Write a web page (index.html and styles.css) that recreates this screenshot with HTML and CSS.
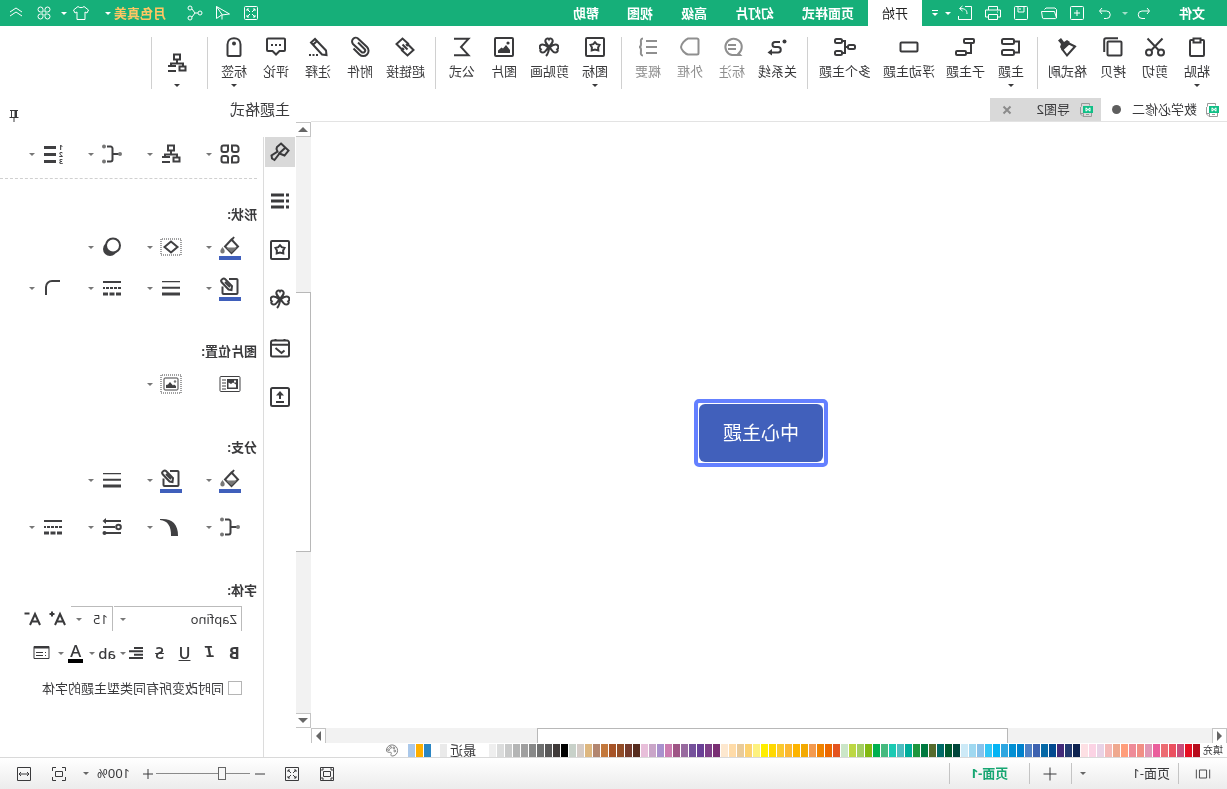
FILE: index.html
```html
<!DOCTYPE html>
<html lang="zh-CN">
<head>
<meta charset="utf-8">
<title>导图2</title>
<link rel="stylesheet" href="styles.css">
</head>
<body>
<svg class="defs" aria-hidden="true">
  <symbol id="i-star" viewBox="0 0 20 20"><rect x="1" y="1" width="18" height="18" rx="1" /><path d="M10 5.2l1.700 2 2.800.7-1.400 2.500.2 3-3.300-.8-3.300.8.2-3-1.400-2.500 2.800-.7z"/></symbol>
  <symbol id="i-clover" viewBox="0 0 20 20"><path d="M10 9.500C7 6.500 5.800 5.200 6.500 3c.8-2 2.800-2 3.500-.7C10.700 1 12.700 1 13.500 3c.7 2.200-.5 3.500-3.500 6.500zM9.500 10.500C6.500 13.500 6 15.500 4 15.500s-3.500-1.500-2.200-3.200C.3 11.500.2 8.500 2.200 7.800c2.300-.8 5 .7 7.300 2.700zM10.500 10.500c3 3 3.500 5 5.500 5s3.500-1.500 2.200-3.200c1.500-.8 1.600-3.800-.4-4.500-2.300-.8-5 .7-7.300 2.700zM10 10c0 4 .8 6.500 3 9"/></symbol>
  <symbol id="i-tree" viewBox="0 0 20 20"><path d="M7 1.500h6v5H7zM10 7v3M4 13v-2.500h12V13M1.500 13.500h6v4h-6zM11 13h8M11 18h8"/></symbol>
  <symbol id="i-branch" viewBox="0 0 20 20"><path d="M3 10h6M15 2.500h-3.500a2 2 0 0 0-2 2v11a2 2 0 0 0 2 2H15"/><g class="dot"><circle cx="2" cy="10" r="2"/><circle cx="18" cy="2.500" r="2"/><circle cx="18" cy="17.500" r="2"/></g></symbol>
  <symbol id="i-bucket" viewBox="0 0 22 24"><path d="M7 1l3 4M9.500 3.500l6.500 7-6.500 6.500L3 10.500z"/><path class="dot" d="M4 11.500h11l-5.500 5z"/><path class="dot" d="M18.500 11c1.200 1.800 2.200 3 2.200 4.200a2.200 2.200 0 0 1-4.400 0c0-1.200 1-2.400 2.200-4.200z"/><path class="bar" d="M0 20h22v4H0z"/></symbol>
  <symbol id="i-outline" viewBox="0 0 22 24"><path d="M12 2H4.500a1 1 0 0 0-1 1v13a1 1 0 0 0 1 1h13a1 1 0 0 0 1-1V9.500M9.500 13l-.5-4 7-7c1.500-1.500 5 1 3.500 3l-7 7.500zM11 10l5-5"/><path class="bar" d="M0 20h22v4H0z"/></symbol>
  <symbol id="i-weights" viewBox="0 0 20 20"><path class="fill" d="M1 3h18v1.300H1zM1 8.700h18v2H1zM1 14.500h18v3H1z"/></symbol>
  <symbol id="i-dashes" viewBox="0 0 20 20"><path class="fill" d="M1 3h18v2H1zM1 9h3v2H1zm4 0h3v2H5zm4 0h3v2H9zm4 0h3v2h-3zm4 0h2v2h-2zM1 14.500h5v3H1zm6.500 0h5v3h-5zm6.500 0h5v3h-5z"/></symbol>
  <symbol id="i-xmind" viewBox="0 0 16 16"><path class="sheet" d="M4.500 3.500v-2h8v3M2.500 4v10.500h8.500l2.500-2.500V5M10.500 14v-2.500H13M5 12.500h3"/><rect class="badge" x="1" y="4" width="10" height="7"/><path class="mark" d="M4 5.700v3.600M8 5.700v3.600M4 6l4 3M8 6l-4 3"/></symbol>
</svg>

<div class="app">
  <header class="titlebar">
    <button class="menu file">文件</button>
    <button class="tool undo" aria-label="撤销"><svg viewBox="0 0 16 16"><path d="M5 3L2.500 6 5 9M3 6h7a3.500 3.500 0 0 1 0 7.500H7"/></svg></button>
    <button class="drop faded" aria-label="撤销列表"><i class="caret"></i></button>
    <button class="tool" aria-label="重做"><svg viewBox="0 0 16 16"><path d="M11 3l2.500 3L11 9M13 6H6.500a3.500 3.500 0 0 0 0 7.500H9"/></svg></button>
    <button class="tool" aria-label="新建"><svg viewBox="0 0 16 16"><path d="M2.500 1.500h11a1 1 0 0 1 1 1v11a1 1 0 0 1-1 1h-11a1 1 0 0 1-1-1v-11a1 1 0 0 1 1-1zM8 5v6M5 8h6"/></svg></button>
    <button class="tool" aria-label="打开"><svg viewBox="0 0 16 16"><path d="M.5 13V4.500L2 3h9l1.500 1.500M.5 13l2-6.500h13L14.500 13a1 1 0 0 1-1 .6H1.500z"/></svg></button>
    <button class="tool" aria-label="保存"><svg viewBox="0 0 16 16"><path d="M2.500 1.500h11a1 1 0 0 1 1 1v11a1 1 0 0 1-1 1h-11a1 1 0 0 1-1-1v-11a1 1 0 0 1 1-1zM5 2v5h6V2M9 3v2"/></svg></button>
    <button class="tool" aria-label="打印"><svg viewBox="0 0 16 16"><path d="M3.500 5V1.500h9V5M3.500 12H.5V5h15v7h-3M3.500 9.500h9v5h-9zM3 7h1"/></svg></button>
    <button class="tool" aria-label="导出"><svg viewBox="0 0 16 16"><path d="M8 1.500H1.500v13h13V11M6 9c0-4 2-5.500 7-5.500M10.500 1l3 2.500-3 2.500"/></svg></button>
    <button class="drop tight" aria-label="导出选项"><i class="caret"></i></button>
    <button class="drop more" aria-label="更多"><i class="line"></i><i class="caret"></i></button>
    <nav class="tabs">
      <button class="menu current">开始</button>
      <button class="menu">页面样式</button>
      <button class="menu">幻灯片</button>
      <button class="menu">高级</button>
      <button class="menu">视图</button>
      <button class="menu">帮助</button>
    </nav>
    <button class="tool first-right" aria-label="全屏"><svg viewBox="0 0 16 16"><path d="M2.500 1.500h11a1 1 0 0 1 1 1v11a1 1 0 0 1-1 1h-11a1 1 0 0 1-1-1v-11a1 1 0 0 1 1-1zM4 6V4h2M4 4l3 3M10 4h2v2M12 4L9 7M4 10v2h2M4 12l3-3M10 12h2v-2M12 12L9 9"/></svg></button>
    <button class="tool" aria-label="发送"><svg viewBox="0 0 16 16"><path d="M14.500 1.500v12L9.500 10 1.500 9zM14.500 1.500L9 9.500v5"/></svg></button>
    <button class="tool" aria-label="分享"><svg viewBox="0 0 16 16"><circle cx="3" cy="8" r="2"/><circle cx="13" cy="3" r="2"/><circle cx="13" cy="13" r="2"/><path d="M5 8h3l3-4M8 8l3 4"/></svg></button>
    <button class="account">月色真美</button>
    <button class="drop" aria-label="账户"><i class="caret"></i></button>
    <button class="tool shirt" aria-label="皮肤"><svg viewBox="0 0 16 16"><path d="M5 1.500c1 1.500 5 1.500 6 0l4.500 3.500-1.500 3-2-1v7.500H4V7L2 8 .5 5z"/></svg></button>
    <button class="drop" aria-label="皮肤选项"><i class="caret"></i></button>
    <button class="tool" aria-label="应用"><svg viewBox="0 0 16 16"><path d="M2 4.500a2.500 2.500 0 0 1 5 0V7H4.500A2.500 2.500 0 0 1 2 4.500zM9 7V4.500A2.500 2.500 0 1 1 11.500 7zM7 9v2.500A2.500 2.500 0 1 1 4.500 9zM9 9h2.500A2.500 2.500 0 1 1 9 11.500z"/></svg></button>
    <button class="tool" aria-label="收起"><svg viewBox="0 0 16 16"><path d="M2 7l6-4 6 4M2 11l6-4 6 4"/></svg></button>
  </header>

  <div class="ribbon">
    <div class="group">
      <button class="cmd"><svg viewBox="0 0 20 20"><path d="M6 3H4a1 1 0 0 0-1 1v14a1 1 0 0 0 1 1h12a1 1 0 0 0 1-1V4a1 1 0 0 0-1-1h-2M6.500 1.500h7v4h-7z"/></svg><span>粘贴</span><i class="caret"></i></button>
      <button class="cmd"><svg viewBox="0 0 20 20"><circle cx="4" cy="15.500" r="3"/><circle cx="16" cy="15.500" r="3"/><path d="M2.500 1.500l11 11.500M17.500 1.500l-11 11.500"/></svg><span>剪切</span></button>
      <button class="cmd"><svg viewBox="0 0 20 20"><rect x="1.500" y="4.500" width="14" height="14" rx="1"/><path d="M5 1.200h12a1.800 1.800 0 0 1 1.800 1.800v12"/></svg><span>拷贝</span></button>
      <button class="cmd three"><svg viewBox="0 0 20 20"><path d="M2 9.500l6-3 6.500 6L10 18.500z"/><path class="fill" d="M7 5l3-2 3 2 3-4L19 3.500l-3 3.500 1 3-2 3.500z"/></svg><span>格式刷</span></button>
    </div>
    <div class="group">
      <button class="cmd"><svg viewBox="0 0 20 20"><rect x="7" y="2" width="12" height="5" rx="1.500"/><rect x="7" y="13" width="12" height="5" rx="1.500"/><path d="M7 4.500H2v11h5"/></svg><span>主题</span><i class="caret"></i></button>
      <button class="cmd three"><svg viewBox="0 0 20 20"><rect x="1" y="2" width="10" height="4" rx="1"/><rect x="9" y="14" width="10" height="4" rx="1"/><path d="M4 6v10h5"/></svg><span>子主题</span></button>
      <button class="cmd four"><svg viewBox="0 0 20 20"><rect x="1.500" y="5.500" width="17" height="9" rx="1"/></svg><span>浮动主题</span></button>
      <button class="cmd four"><svg viewBox="0 0 20 20"><rect x="0" y="8" width="7" height="4" rx="1.500"/><rect x="13" y="2" width="7" height="4" rx="1.500"/><rect x="13" y="14" width="7" height="4" rx="1.500"/><path d="M7 10h3M13 4h-3v12h3"/></svg><span>多个主题</span></button>
    </div>
    <div class="group">
      <button class="cmd three"><svg viewBox="0 0 20 20"><path d="M7 5h5a2.500 2.500 0 0 1 0 5H9a2.700 2.700 0 0 0 0 5.500h7"/><path class="fill" d="M15 12l4.500 3.500-4.500 3z"/><circle class="fill" cx="2.500" cy="4.500" r="2"/></svg><span>关系线</span></button>
      <button class="cmd" disabled><svg viewBox="0 0 20 20"><path d="M3.500 16.500A8.200 8.200 0 1 1 10 18H2zM6 8h8M6 12h8"/></svg><span>标注</span></button>
      <button class="cmd" disabled><svg viewBox="0 0 20 20"><path d="M1.500 3a1.500 1.500 0 0 1 1.500-1.500h9c3 1 7 6 7 8.500s-4 7-7 7.500H3A1.500 1.500 0 0 1 1.500 16z"/></svg><span>外框</span></button>
      <button class="cmd" disabled><svg viewBox="0 0 20 20"><path d="M1 4h11M1 10h11M1 16h11M15 1.500c3 0 2 3 2 5.500 0 1.500.5 3 2 3-1.500 0-2 1.500-2 3 0 2.500 1 5.500-2 5.500"/></svg><span>概要</span></button>
    </div>
    <div class="group">
      <button class="cmd"><svg><use href="#i-star"/></svg><span>图标</span><i class="caret"></i></button>
      <button class="cmd three"><svg><use href="#i-clover"/></svg><span>剪贴画</span></button>
      <button class="cmd"><svg viewBox="0 0 20 20"><rect x="1" y="1" width="18" height="18" rx="1"/><path class="fill" d="M4 16v-3l4-5 3 3.500 1.500-1 3.500 3V16z"/><circle class="fill" cx="6" cy="6" r="1.600"/></svg><span>图片</span></button>
      <button class="cmd"><svg viewBox="0 0 20 20"><path d="M18 1.800H3.500l7.500 8.200-7.500 8.200H18"/></svg><span>公式</span></button>
    </div>
    <div class="group">
      <button class="cmd three"><svg viewBox="0 0 20 20"><path d="M9 8.500L7 6.500 12.500 1.500 18.500 7l-5.500 5.500-1.500-1.500M11 11.500l2 2L7.500 18.500 1.500 13 7 7.500l1.500 1.500M7.500 12.500l5-5"/></svg><span>超链接</span></button>
      <button class="cmd"><svg viewBox="0 0 20 20"><path d="M12 5.500l-6.500 6.500a2 2 0 0 0 3 3l8.500-8a3.700 3.700 0 0 0-5.500-5L3 10a5 5 0 0 0 7.500 7.500l6-6"/></svg><span>附件</span></button>
      <button class="cmd"><svg viewBox="0 0 20 20"><path d="M2 13.500L13 2l4 3.500L6 17.500l-4.500.5zM11 4l4 3.700"/><path class="fill" d="M10 17h2v2h-2zm3.500 0h2v2h-2zm3.500 0h2v2h-2z"/></svg><span>注释</span></button>
      <button class="cmd"><svg viewBox="0 0 20 20"><path d="M2 1.500h16a1 1 0 0 1 1 1V13a1 1 0 0 1-1 1h-4.500L10 17.500 6.500 14H2a1 1 0 0 1-1-1V2.500a1 1 0 0 1 1-1z"/><path class="fill" d="M5 7h2v2H5zm4 0h2v2H9zm4 0h2v2h-2z"/></svg><span>评论</span></button>
      <button class="cmd"><svg viewBox="0 0 20 20"><path d="M3.500 7.500c0-4 3-6.300 6.500-6.300s6.500 2.300 6.500 6.300V18a1 1 0 0 1-1 1h-11a1 1 0 0 1-1-1z"/><circle class="fill" cx="10" cy="6.500" r="2"/></svg><span>标签</span><i class="caret"></i></button>
    </div>
    <div class="group solo">
      <button class="cmd" aria-label="布局"><svg><use href="#i-tree"/></svg><i class="caret"></i></button>
    </div>
  </div>

  <main class="work">
    <section class="editor">
      <div class="docs">
        <button class="doc"><svg><use href="#i-xmind"/></svg><span>数学必修二</span><i class="unsaved"></i></button>
        <button class="doc active"><svg><use href="#i-xmind"/></svg><span>导图2</span><svg class="close" viewBox="0 0 10 10"><path d="M1.500 1.500l7 7M8.500 1.500l-7 7"/></svg></button>
      </div>
      <div class="stage">
        <div class="canvas"><div class="topic"><span>中心主题</span></div></div>
        <div class="vscroll">
          <button class="up" aria-label="向上滚动"><i></i></button>
          <div class="track"><div class="thumb"></div></div>
          <button class="down" aria-label="向下滚动"><i></i></button>
        </div>
        <div class="hscroll">
          <button class="left" aria-label="向左滚动"><i></i></button>
          <div class="track"><div class="thumb"></div></div>
          <button class="right" aria-label="向右滚动"><i></i></button>
        </div>
      </div>
      <div class="palette">
        <span class="fill-label">填充</span>
        <div class="swatches" id="colors"></div>
        <span class="recent-label">最近</span>
        <div class="swatches"><i class="sw" style="background:#eaeaea"></i></div>
        <div class="swatches recent" id="recent"></div>
        <button class="wheel" aria-label="更多颜色"><svg viewBox="0 0 14 14"><path d="M7 1a6 6 0 0 1 6 5.500c0 2-1.500 2.500-3 2.500H8.500c-1 0-1 1-.5 1.800S8 13 7 13A6 6 0 0 1 7 1z"/><circle cx="4" cy="7.500" r="1"/><circle cx="5" cy="4.200" r="1"/><circle cx="8.500" cy="3.700" r="1"/><circle cx="10.700" cy="6.200" r="1"/></svg></button>
      </div>
    </section>

    <aside class="panel">
      <div class="panel-head"><h2>主题格式</h2><button class="pin" aria-label="固定"><svg viewBox="0 0 12 14"><path d="M2 1.500h8M3.500 1.500V8M8.500 1.500V8M1.500 8.500h9M6 9v4"/><path class="fill" d="M3 1h2.500v7H3z"/></svg></button></div>
      <div class="panel-body">
        <div class="rail">
          <button class="on" aria-label="样式"><svg viewBox="0 0 20 20"><path d="M9 1.500l-7.500 7 4 5 2.500-1 2.500-1 5 6.500 2.500-1.500.5-3-6-4 1-2.500-.5-2zM5 6l6.500 6"/></svg></button>
          <button aria-label="大纲"><svg viewBox="0 0 20 20"><path class="fill" d="M1 2.500h3v3H1zM1 8.500h3v3H1zM1 14.500h3v3H1zM6 2.500h13v3H6zM6 8.500h13v3H6zM6 14.500h13v3H6z"/></svg></button>
          <button aria-label="图标"><svg><use href="#i-star"/></svg></button>
          <button aria-label="剪贴画"><svg><use href="#i-clover"/></svg></button>
          <button aria-label="任务"><svg viewBox="0 0 20 20"><path d="M3 2.500h14a2 2 0 0 1 2 2V17a1.500 1.500 0 0 1-1.500 1.500h-15A1.500 1.500 0 0 1 1 17V4.500a2 2 0 0 1 2-2zM1 6.800h18M5.500 1v2M14.500 1v2M14.500 10l-6 5L5.500 12.500"/></svg></button>
          <button aria-label="导出"><svg viewBox="0 0 20 20"><rect x="1" y="1" width="18" height="18" rx="1.500"/><path d="M10 12V7M6 15h8"/><path class="fill" d="M10 4l4 4.500H6z"/></svg></button>
        </div>
        <div class="format">
          <div class="tools top">
            <button aria-label="主题样式"><svg viewBox="0 0 20 20"><path d="M1.500 4a2.500 2.500 0 0 1 2.500-2.500h4V6a2 2 0 0 1-2 2H3.500a2 2 0 0 1-2-2zM12 1.500h4.500a2 2 0 0 1 2 2V6a2 2 0 0 1-2 2H14a2 2 0 0 1-2-2zM1.500 14a2 2 0 0 1 2-2H6a2 2 0 0 1 2 2v4.500H3.500a2 2 0 0 1-2-2zM12 14a2 2 0 0 1 2-2h2.500a2 2 0 0 1 2 2v2.500a2 2 0 0 1-2 2H12z"/></svg><i class="caret"></i></button>
            <button aria-label="布局"><svg><use href="#i-tree"/></svg><i class="caret"></i></button>
            <button aria-label="连接样式"><svg><use href="#i-branch"/></svg><i class="caret"></i></button>
            <button aria-label="编号"><svg viewBox="0 0 20 20"><path class="fill" d="M7 2h12v3H7zM7 9h12v3H7zM7 16h12v3H7z"/><g class="nums"><text x="0" y="6">1</text><text x="0" y="13">2</text><text x="0" y="20">3</text></g></svg><i class="caret"></i></button>
          </div>
          <h3>形状:</h3>
          <div class="tools">
            <button aria-label="填充"><svg class="tall"><use href="#i-bucket"/></svg><i class="caret"></i></button>
            <button aria-label="形状"><svg viewBox="0 0 20 20"><rect class="dots" x="0" y="2" width="20" height="16"/><path d="M10 4.500l6.500 5.500-6.500 5.500L3.500 10z"/></svg><i class="caret"></i></button>
            <button aria-label="阴影"><svg viewBox="0 0 20 20"><circle class="fill" cx="12" cy="12" r="7"/><circle class="moon" cx="9" cy="8.500" r="7"/></svg><i class="caret"></i></button>
          </div>
          <div class="tools second">
            <button aria-label="边框颜色"><svg class="tall"><use href="#i-outline"/></svg><i class="caret"></i></button>
            <button aria-label="边框粗细"><svg><use href="#i-weights"/></svg><i class="caret"></i></button>
            <button aria-label="边框线型"><svg><use href="#i-dashes"/></svg><i class="caret"></i></button>
            <button aria-label="圆角"><svg viewBox="0 0 20 20"><path d="M3 3h8a6 6 0 0 1 6 6v8"/></svg><i class="caret"></i></button>
          </div>
          <h3>图片位置:</h3>
          <div class="tools">
            <button aria-label="图文排列"><svg viewBox="0 0 20 20"><rect class="thin" x="0" y="2.500" width="20" height="15" rx="1"/><path class="fill" d="M2 5h11v10H2z"/><path class="snow" d="M4 13.500v-3l3-2 2 1.500 2.500-1.500v5zM4 6.500h2v2H4z"/><path class="thin" d="M14 6h4M14 9h4M14 12h4M14 15h4"/></svg></button>
            <button aria-label="图片位置"><svg viewBox="0 0 20 20"><rect class="dots" x="0" y="1" width="20" height="18"/><rect class="thin" x="3" y="4" width="14" height="12" rx="1"/><path class="fill" d="M5 14v-2l2-1.500 1 1 3-3.500 2 2.500 2 .5v3z"/><circle class="dot" cx="6" cy="7.500" r="1.200"/></svg><i class="caret"></i></button>
          </div>
          <h3>分支:</h3>
          <div class="tools">
            <button aria-label="分支填充"><svg class="tall"><use href="#i-bucket"/></svg><i class="caret"></i></button>
            <button aria-label="分支颜色"><svg class="tall"><use href="#i-outline"/></svg><i class="caret"></i></button>
            <button aria-label="分支粗细"><svg><use href="#i-weights"/></svg><i class="caret"></i></button>
          </div>
          <div class="tools third">
            <button aria-label="分支样式"><svg><use href="#i-branch"/></svg><i class="caret"></i></button>
            <button aria-label="渐细线"><svg viewBox="0 0 20 20"><path class="fill" d="M21 2C10 1 3 6 3 19h7C10 9 13 4 21 3z"/></svg><i class="caret"></i></button>
            <button aria-label="箭头"><svg viewBox="0 0 20 20"><path d="M1 4h15M7 10h12M1 16h15"/><path class="fill" d="M16 1l3.500 3L16 7z"/><circle cx="3.500" cy="10" r="2.300"/><circle class="fill" cx="17.500" cy="16" r="2"/></svg><i class="caret"></i></button>
            <button aria-label="分支线型"><svg><use href="#i-dashes"/></svg><i class="caret"></i></button>
          </div>
          <h3>字体:</h3>
          <div class="fontrow">
            <span class="combo family"><select aria-label="字体"><option>Zapfino</option></select><i class="caret"></i></span>
            <span class="combo size"><select aria-label="字号"><option>15</option></select><i class="caret"></i></span>
            <button aria-label="增大字号"><svg viewBox="0 0 18 18"><path d="M2 15L7 4l5 11M4 11.500h6M12.500 4h5M15 1.500v5"/></svg></button>
            <button aria-label="减小字号"><svg viewBox="0 0 18 18"><path d="M2 15L7 4l5 11M4 11.500h6M12.500 3.500h5"/></svg></button>
          </div>
          <div class="textrow">
            <button class="letter bold">B</button>
            <button class="letter italic">I</button>
            <button class="letter under">U</button>
            <button class="letter strike">S</button>
            <button class="pair" aria-label="对齐"><svg viewBox="0 0 14 14"><path d="M0 2h9M0 5.300h14M0 8.700h9M0 12h14"/></svg><i class="caret"></i></button>
            <button class="pair ab">ab<i class="caret"></i></button>
            <button class="pair color"><span>A</span><i class="caret"></i></button>
            <button class="pair box" aria-label="文本框"><svg viewBox="0 0 18 16"><path class="thin" d="M1 1.500h15v12H1zM4 7.500h1M4 10.500h1M7 7.500h7M7 10.500h7"/><path class="fill" d="M1 1h15v2.500H1z"/></svg></button>
          </div>
          <label class="same"><input type="checkbox"><span>同时改变所有同类型主题的字体</span></label>
        </div>
      </div>
    </aside>
  </main>

  <footer class="status">
    <button class="view" aria-label="页面视图"><svg viewBox="0 0 18 16"><path d="M1.500 3v10M5 3.500h8v9H5zM16.500 3v10"/></svg></button>
    <button class="page"><span>页面-1</span><i class="caret"></i></button>
    <button class="add" aria-label="添加页面"><svg viewBox="0 0 16 16"><path d="M8 1.500v13M1.500 8h13"/></svg></button>
    <button class="pagetab"><span>页面-1</span></button>
    <button class="ico push" aria-label="适合页面"><svg viewBox="0 0 16 16"><path d="M1.500 1.500h13v13h-13zM4.500 5.500h7v5h-7zM3 5V3h2M11 3h2v2M13 11v2h-2M5 13H3v-2"/></svg></button>
    <button class="ico" aria-label="全屏"><svg viewBox="0 0 16 16"><path d="M1.500 1.500h13v13h-13zM4 6V4h2M4 4l3 3M10 4h2v2M12 4L9 7M4 10v2h2M4 12l3-3M10 12h2v-2M12 12L9 9"/></svg></button>
    <button class="step minus" aria-label="缩小"><svg viewBox="0 0 12 12"><path d="M1 6h10"/></svg></button>
    <input class="zoom" type="range" min="0" max="100" value="28" aria-label="缩放">
    <button class="step" aria-label="放大"><svg viewBox="0 0 12 12"><path d="M1 6h10M6 1v10"/></svg></button>
    <button class="percent"><span>100%</span><i class="caret"></i></button>
    <button class="ico" aria-label="居中"><svg viewBox="0 0 16 16"><path d="M1.500 5V1.500H5M11 1.500h3.500V5M14.500 11v3.500H11M5 14.500H1.500V11M4.500 5.500h7v5h-7z"/></svg></button>
    <button class="ico last" aria-label="适合宽度"><svg viewBox="0 0 16 16"><path d="M1.500 1.500h13v13h-13zM3 8h10M5 6L3 8l2 2M11 6l2 2-2 2"/></svg></button>
  </footer>
</div>
<script src="app.js"></script>
</body>
</html>
```

FILE: styles.css
```css
* { box-sizing: border-box; }

body {
  margin: 0;
  font-family: "Noto Sans", "Noto Sans CJK SC", sans-serif;
  font-size: 13px;
  color: #3a3a3c;
  background: #fff;
}

/* The whole workspace is drawn as a mirror image. */
.app {
  display: flex;
  flex-direction: column;
  min-height: 100vh;
  transform: scaleX(-1);
}

.defs { position: absolute; width: 0; height: 0; }

button {
  display: flex;
  align-items: center;
  justify-content: center;
  flex: none;
  padding: 0;
  border: 0;
  background: none;
  color: inherit;
  font: inherit;
  white-space: nowrap;
}

svg {
  display: block;
  flex: none;
  fill: none;
  stroke: currentColor;
  stroke-width: 2;
  overflow: visible;
}
.fill { fill: currentColor; stroke: none; }
.thin { stroke-width: 1; }
.dot { fill: #777; stroke: none; }
.bar { fill: #3f5fbb; stroke: none; }
.snow { fill: #fff; stroke: none; }
.moon { fill: #fff; }
.dots { stroke-width: 1; stroke-dasharray: 1 1; }
.nums { fill: currentColor; stroke: none; font-size: 7px; font-weight: 700; }
.sheet { stroke: #999; stroke-width: 1; }
.badge { fill: #10bf86; stroke: none; }
.mark { stroke: #fff; stroke-width: 1; }

.caret {
  flex: none;
  width: 0;
  height: 0;
  border: 3px solid transparent;
  border-top-color: currentColor;
  border-bottom: 0;
}

/* Title bar */
.titlebar {
  display: flex;
  height: 26px;
  padding-right: 2px;
  background: #16af79;
  color: #fff;
}
.titlebar svg { width: 16px; height: 16px; stroke-width: 1; }
.menu { padding: 0 14px 2px; font-weight: 700; }
.file { width: 70px; }
.tool { width: 28px; }
.undo { width: 26px; }
.drop { width: 12px; }
.tight { width: 6px; }
.faded { opacity: .6; }
.more { flex-direction: column; gap: 2px; width: 14px; margin-left: 3px; }
.more .line { width: 6px; height: 1px; background: #fff; }
.tabs { display: flex; margin-left: 6px; }
.current { background: #fff; color: #222; font-weight: 400; }
.first-right { margin-left: auto; }
.account { margin-left: 15px; padding-bottom: 2px; color: #ffc663; font-weight: 700; }
.shirt { width: 22px; margin-left: 10px; }

/* Ribbon */
.ribbon { display: flex; height: 69px; padding-left: 9px; }
.group { display: flex; padding-top: 11px; }
.group + .group { margin-left: 5px; }
.group + .group::before {
  content: "";
  width: 1px;
  height: 52px;
  margin-right: 5px;
  background: #d0d0d0;
}
.cmd {
  flex-direction: column;
  justify-content: flex-start;
  width: 42px;
  height: 54px;
}
.three { width: 49px; }
.four { width: 64px; }
.cmd svg { width: 20px; height: 20px; }
.cmd span { margin-top: 4px; line-height: 20px; }
.cmd .caret { margin-top: 3px; }
.cmd:disabled { color: #8f8f8f; }
.solo .cmd { width: 50px; padding-top: 16px; }
.solo .caret { margin-top: 11px; }
.solo::after { content: ""; width: 1px; height: 52px; background: #d0d0d0; }

/* Editor */
.work { display: flex; flex: 1; }
.editor { display: flex; flex: 1; flex-direction: column; min-width: 0; }
.docs { display: flex; height: 27px; padding-top: 3px; margin-right: 15px; border-bottom: 1px solid #e3e3e3; }
.doc { padding: 0 11px 0 7px; }
.doc svg { width: 16px; height: 16px; margin-right: 7px; }
.doc span { padding-bottom: 2px; }
.doc.active { padding-left: 7px; background: #d9d9d9; }
.doc.active span { margin-left: 1px; }
.unsaved { width: 9px; height: 9px; margin-left: 11px; border-radius: 50%; background: #5e5e5e; }
.doc .close { width: 10px; height: 10px; margin: 0 1px 0 25px; stroke: #8b8b8b; }
.stage {
  display: grid;
  flex: 1;
  grid-template-columns: 1fr 15px;
  grid-template-rows: 1fr 15px;
}
.canvas { display: flex; align-items: center; justify-content: center; padding: 16px 0 0 16px; }
.topic { padding: 1px; border: 4px solid #6480ff; border-radius: 5px; background: #fff; }
.topic span {
  display: block;
  padding: 15px 24px;
  border-radius: 6px;
  background: #4160bb;
  color: #fff;
  font-size: 19px;
  line-height: 28px;
}
.vscroll { display: flex; flex-direction: column; background: #f2f2f2; }
.hscroll { display: flex; grid-column: 1; background: #f2f2f2; }
.track { display: flex; flex: 1; }
.vscroll .track { flex-direction: column; }
.track::before { content: ""; flex: 156; }
.track::after { content: ""; flex: 162; }
.thumb { flex: 258; border: 1px solid #b8b8b8; border-right: 0; background: #fff; }
.hscroll .track::before { flex: 204; }
.hscroll .track::after { flex: 211; }
.hscroll .thumb { flex: 470; border: 1px solid #b8b8b8; border-bottom: 0; }
.stage button { width: 15px; height: 15px; border: 1px solid #c4c4c4; background: #fff; }
.stage button i { border: 5px solid transparent; }
.stage .up i { border-bottom-color: #666; border-top: 0; }
.stage .down i { border-top-color: #666; border-bottom: 0; }
.stage .left i { border-right-color: #666; border-left: 0; }
.stage .right i { border-left-color: #666; border-right: 0; }
.stage .up, .stage .down { border-right: 0; }
.stage .left, .stage .right { border-bottom: 0; }

.palette { display: flex; align-items: center; height: 14px; padding-left: 4px; }
.fill-label { width: 23px; font-size: 10px; line-height: 14px; }
.swatches { display: flex; gap: 1px; }
.sw { width: 7px; height: 13px; }
.recent-label { margin: 0 3px 0 13px; line-height: 14px; }
.recent { margin-left: 9px; }
.wheel { margin-left: 9px; }
.wheel svg { width: 14px; height: 13px; stroke: #777; stroke-width: 1; }

/* Format panel */
.panel { display: flex; flex: none; flex-direction: column; width: 296px; }
.panel-head { display: flex; align-items: center; height: 28px; padding: 0 8px 0 6px; }
.panel-head h2 { margin: 0; font-size: 15px; font-weight: 400; line-height: 22px; }
.pin { align-self: flex-end; margin-left: auto; }
.pin svg { width: 12px; height: 14px; stroke-width: 1; }
.panel-body { display: flex; flex: 1; margin-top: 14px; }
.rail { display: flex; flex-direction: column; gap: 19px; width: 33px; padding-left: 1px; border-right: 1px solid #dcdcdc; }
.rail button { width: 30px; height: 30px; }
.rail svg { width: 20px; height: 20px; }
.rail .on { background: #d9d9d9; }
.format { flex: 1; min-width: 0; padding: 5px 0 0 6px; }
.tools {
  display: grid;
  grid-template-columns: repeat(4, 59px);
  height: 24px;
  margin-left: 16px;
}
.tools button { justify-content: flex-start; gap: 7px; color: #404042; }
.tools svg { width: 20px; height: 20px; margin: 0 1px 2px; }
.tools .tall { width: 22px; height: 24px; margin: 0; }
.tools .caret { margin-bottom: 2px; color: #777; }
.tools.top { height: 37px; margin-left: 0; padding: 1px 0 11px 16px; border-bottom: 1px dashed #d0d0d0; }
.second { margin-top: 17px; }
.third { margin-top: 23px; }
.format h3 { margin: 40px 0 12px; font-size: 13px; font-weight: 700; line-height: 20px; }
.format .top + h3 { margin-top: 25px; }
.format h3:last-of-type { margin-bottom: 6px; }
.fontrow { display: flex; height: 25px; margin-left: 15px; }
.combo { display: flex; align-items: center; border: 1px solid #bbb; border-right: 0; border-bottom: 0; }
.combo select {
  flex: 1;
  min-width: 0;
  height: 24px;
  padding: 0 0 0 4px;
  border: 0;
  appearance: none;
  background: none;
  color: inherit;
  font: inherit;
}
.combo .caret { color: #777; }
.family { width: 128px; padding-right: 6px; margin-right: 1px; }
.size { width: 42px; padding-right: 5px; }
.fontrow button { width: 25px; }
.fontrow button svg { width: 18px; height: 18px; }
.textrow { display: flex; height: 22px; margin: 11px 0 0 10px; font-size: 16px; }
.letter { width: 25px; font-family: "Open Sans", sans-serif; font-weight: 600; }
.bold { font-weight: 700; }
.italic { font-family: "Liberation Mono", monospace; font-style: italic; font-weight: 700; }
.under { text-decoration: underline; text-decoration-thickness: 1px; }
.strike { text-decoration: line-through; text-decoration-thickness: 1px; }
.pair { gap: 3px; }
.pair .caret { color: #777; }
.pair svg { width: 14px; height: 14px; margin-left: 4px; stroke-width: 2; }
.ab { margin-left: 4px; font-size: 15px; font-weight: 500; }
.color { margin-left: 6px; gap: 4px; }
.color span { width: 15px; height: 19px; border-bottom: 4px solid #000; line-height: 14px; font-size: 17px; font-weight: 500; text-align: center; }
.box { margin-left: 4px; }
.box svg { width: 18px; height: 16px; }
.same { display: flex; align-items: center; gap: 4px; margin: 14px 0 0 15px; line-height: 20px; white-space: nowrap; }
.same input { width: 14px; height: 14px; margin: 0; border: 1px solid #b5b5b5; appearance: none; background: #fff; }

/* Status bar */
.status {
  display: flex;
  align-items: center;
  height: 32px;
  border-top: 1px solid #d9d9d9;
  background: linear-gradient(#fff, #ececec);
}
.status svg { width: 16px; height: 16px; stroke-width: 1; }
.status span { padding-bottom: 2px; }
.status .view, .status .page, .status .add, .status .pagetab { height: 21px; border-right: 1px solid #c4c4c4; }
.view { width: 49px; }
.page { justify-content: space-between; width: 107px; padding: 0 8px; }
.page .caret, .percent .caret { color: #666; }
.add { width: 42px; }
.pagetab { width: 80px; color: #17a672; font-weight: 700; }
.ico { width: 35px; }
.push { margin-left: auto; }
.step { width: 16px; }
.minus { width: 20px; margin-left: 4px; }
.status .step svg { width: 12px; height: 12px; }
.zoom { width: 94px; height: 16px; margin: 0; appearance: none; background: linear-gradient(#8a8a8a, #8a8a8a) center / 100% 1px no-repeat; }
.zoom::-webkit-slider-thumb { width: 8px; height: 13px; border: 1px solid #666; appearance: none; background: #f7f7f7; }
.percent { gap: 8px; padding: 0 6px 0 10px; }
.last { margin-right: 7px; }
```

FILE: app.js
```js
const colors = `b60c1c e60f22 c94f7c eb5060 ec6c72 ea5f9c e197b5 f18f85 ee8b98 ff9e7b
efa98f f5bab8 e9d3e6 fbd3e4 fde0e4 0e2350 233a70 422a78 034a90 0568a6
3d62b0 5080c4 0081cc 028fd3 2ea6e0 04b4f4 33c6f6 8ac2ea 9fd8f0 cdeaf7
00453a 00592e 006a66 566b2d 00793f 1e963e 00ae9c 4fbdc0 1bcab3 45ba7f
00b050 83b912 a4cf62 bdd743 cbe6c8 e35420 ec6800 f08300 f39a4f f3a900
fdb400 fcb832 fbc92f ffd800 ffee00 fdf17f fcd170 eacb98 fedba8 fde8cf
792f73 7f3f87 6a4096 75519b 986a9f 9e5585 cc7cb0 a991cd c9a5c8 e8bfda
562c1e 763c2d 934e28 a75427 c3783c b28670 deb77f d5cbc6 c8d1c9 000000
3f3a39 595858 6f7070 888989 9f9f9f b4b5b5 c9caca dbdcdc eeeeee`.split(/\s+/);

function fill(id, list) {
  const box = document.getElementById(id);
  for (const c of list) {
    const sw = document.createElement("i");
    sw.className = "sw";
    sw.style.background = "#" + c;
    box.append(sw);
  }
}

fill("colors", colors);
fill("recent", ["2b86c3", "ffaf00", "aac8ea"]);
```
